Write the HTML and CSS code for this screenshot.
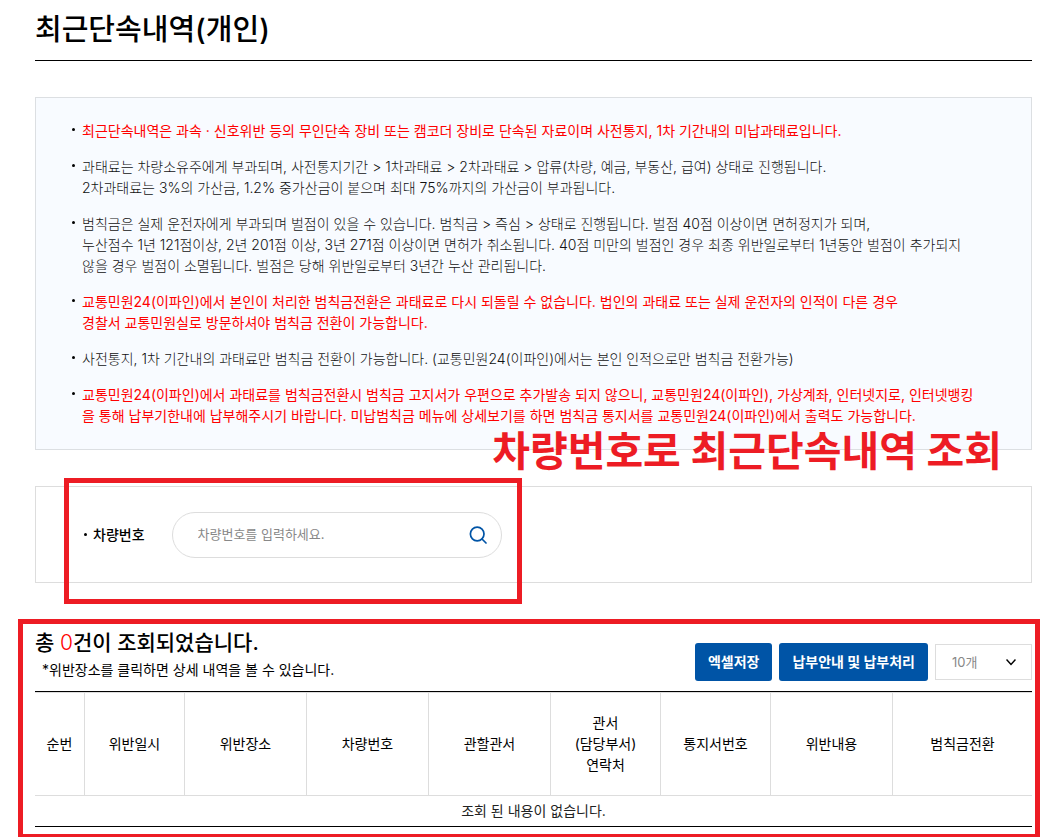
FILE: index.html
```html
<!DOCTYPE html>
<html lang="ko">

<head>
    <meta charset="UTF-8">
    <meta name="viewport" content="width=device-width, initial-scale=1.0">
    <title>최근단속내역(개인)</title>
    <link rel="stylesheet" href="styles.css">
</head>

<body>
    <main class="content">
        <h1>최근단속내역(개인)</h1>

        <div class="notice">
            <ul>
                <li class="red">최근단속내역은 과속 · 신호위반 등의 무인단속 장비 또는 캠코더 장비로 단속된 자료이며 사전통지, 1차 기간내의 미납과태료입니다.</li>
                <li>과태료는 차량소유주에게 부과되며, 사전통지기간 &gt; 1차과태료 &gt; 2차과태료 &gt; 압류(차량, 예금, 부동산, 급여) 상태로 진행됩니다.<br>
                    2차과태료는 3%의 가산금, 1.2% 중가산금이 붙으며 최대 75%까지의 가산금이 부과됩니다.</li>
                <li>범칙금은 실제 운전자에게 부과되며 벌점이 있을 수 있습니다. 범칙금 &gt; 즉심 &gt; 상태로 진행됩니다. 벌점 40점 이상이면 면허정지가 되며,<br>
                    누산점수 1년 121점이상, 2년 201점 이상, 3년 271점 이상이면 면허가 취소됩니다. 40점 미만의 벌점인 경우 최종 위반일로부터 1년동안 벌점이 추가되지<br>
                    않을 경우 벌점이 소멸됩니다. 벌점은 당해 위반일로부터 3년간 누산 관리됩니다.</li>
                <li class="red">교통민원24(이파인)에서 본인이 처리한 범칙금전환은 과태료로 다시 되돌릴 수 없습니다. 법인의 과태료 또는 실제 운전자의 인적이 다른 경우<br>
                    경찰서 교통민원실로 방문하셔야 범칙금 전환이 가능합니다.</li>
                <li>사전통지, 1차 기간내의 과태료만 범칙금 전환이 가능합니다. (교통민원24(이파인)에서는 본인 인적으로만 범칙금 전환가능)</li>
                <li class="red">교통민원24(이파인)에서 과태료를 범칙금전환시 범칙금 고지서가 우편으로 추가발송 되지 않으니, 교통민원24(이파인), 가상계좌, 인터넷지로, 인터넷뱅킹<br>
                    을 통해 납부기한내에 납부해주시기 바랍니다. 미납범칙금 메뉴에 상세보기를 하면 범칙금 통지서를 교통민원24(이파인)에서 출력도 가능합니다.</li>
            </ul>
        </div>

        <form class="search">
            <label for="carNo">차량번호</label>
            <div class="searchbox">
                <input type="text" id="carNo" placeholder="차량번호를 입력하세요.">
                <button type="submit" aria-label="검색">
                    <svg width="18" height="18" viewBox="0 0 18 18" fill="none" stroke="#0054a6" stroke-width="1.7">
                        <circle cx="8.2" cy="8" r="6.8" />
                        <path d="M13 13l4 4" stroke-linecap="round" />
                    </svg>
                </button>
            </div>
            <p class="mark-text">차량번호로 최근단속내역 조회</p>
            <div class="mark mark-search"></div>
        </form>

        <section class="result">
            <div class="result-top">
                <div>
                    <h2>총 <span>0</span>건이 조회되었습니다.</h2>
                    <p>*위반장소를 클릭하면 상세 내역을 볼 수 있습니다.</p>
                </div>
                <div class="tools">
                    <button type="button" class="btn">엑셀저장</button>
                    <button type="button" class="btn">납부안내 및 납부처리</button>
                    <div class="select">
                        <select aria-label="목록 개수">
                            <option>10개</option>
                            <option>20개</option>
                            <option>50개</option>
                        </select>
                        <svg width="10" height="8" viewBox="0 0 10 8" fill="none" stroke="#000" stroke-width="1.5">
                            <path d="M0.5 1.5l4.5 5 4.5-5" />
                        </svg>
                    </div>
                </div>
            </div>

            <table>
                <colgroup>
                    <col class="c-no">
                    <col class="c-date">
                    <col class="c-mid">
                    <col class="c-mid">
                    <col class="c-mid">
                    <col class="c-office">
                    <col class="c-office">
                    <col class="c-mid">
                    <col class="c-last">
                </colgroup>
                <thead>
                    <tr>
                        <th>순번</th>
                        <th>위반일시</th>
                        <th>위반장소</th>
                        <th>차량번호</th>
                        <th>관할관서</th>
                        <th>관서<br>(담당부서)<br>연락처</th>
                        <th>통지서번호</th>
                        <th>위반내용</th>
                        <th>범칙금전환</th>
                    </tr>
                </thead>
                <tbody>
                    <tr>
                        <td colspan="9">조회 된 내용이 없습니다.</td>
                    </tr>
                </tbody>
            </table>
            <div class="mark mark-result"></div>
        </section>
    </main>
</body>

</html>
```
FILE: styles.css
```css
* {
    box-sizing: border-box;
}

body {
    margin: 0;
    background-color: #fff;
    color: #000;
    font-family: Inter, "Noto Sans CJK KR", sans-serif;
    font-size: 14px;
    line-height: 21px;
}

h1,
h2,
p,
ul {
    margin: 0;
    padding: 0;
}

.content {
    padding: 0 26px 10px 35px;
}

h1 {
    height: 61px;
    margin-bottom: 36px;
    border-bottom: 1px solid #000;
    font-size: 29px;
    font-weight: 500;
    line-height: 60px;
}

/* Notice */
.notice {
    padding: 22px 36px 23px;
    border: 1px solid #dcdfe2;
    background-color: #f8fbff;
}

.notice ul {
    list-style: none;
}

.notice li {
    position: relative;
    padding-left: 10px;
    color: #111;
    font-weight: 300;
    white-space: nowrap;
}

.notice li + li {
    margin-top: 15px;
}

.notice li::before {
    content: "";
    position: absolute;
    top: 8px;
    left: 0;
    width: 3px;
    height: 3px;
    border-radius: 50%;
    background-color: #000;
}

.notice li.red {
    color: #f00;
    font-weight: 400;
}

/* Search */
.search {
    position: relative;
    display: flex;
    align-items: center;
    margin-top: 36px;
    padding: 25px 48px 24px;
    border: 1px solid #ddd;
}

.search label {
    display: flex;
    align-items: center;
    gap: 6px;
    margin-right: 27px;
    padding-bottom: 2px;
    font-weight: 500;
}

.search label::before {
    content: "";
    width: 3px;
    height: 3px;
    border-radius: 50%;
    background-color: #000;
}

.searchbox {
    display: flex;
    align-items: center;
    width: 330px;
    height: 46px;
    padding: 0 14px 0 25px;
    border: 1px solid #ddd;
    border-radius: 23px;
}

.searchbox input {
    flex: 1;
    min-width: 0;
    padding: 0 0 2px;
    border: 0;
    outline: none;
    background: none;
    font-family: inherit;
    font-size: 13px;
}

.searchbox input::placeholder {
    color: #888;
}

.searchbox button {
    display: flex;
    padding: 0;
    border: 0;
    background: none;
    cursor: pointer;
}

/* Red guide marks over the page */
.mark {
    position: absolute;
    border: 5px solid #ed1c24;
    pointer-events: none;
}

.mark-search {
    top: -9px;
    left: 28px;
    width: 458px;
    height: 126px;
}

.mark-result {
    top: -9px;
    right: -8px;
    bottom: -10px;
    left: -17px;
    border-bottom-width: 3px;
}

.mark-text {
    position: absolute;
    top: -58px;
    right: 29px;
    color: #ed1c24;
    font-size: 41px;
    font-weight: 700;
    line-height: 44px;
    white-space: nowrap;
}

/* Result */
.result {
    position: relative;
    margin-top: 45px;
}

.result-top {
    display: flex;
    justify-content: space-between;
    height: 63px;
}

.result h2 {
    font-size: 21px;
    font-weight: 500;
    line-height: 30px;
}

.result h2 span {
    color: #f00;
    font-weight: 300;
}

.result p {
    margin-top: 1px;
    padding-left: 7px;
}

.tools {
    display: flex;
    align-items: center;
    gap: 7px;
    padding-top: 5px;
}

.btn {
    height: 38px;
    padding: 0 13px 2px;
    border: 0;
    border-radius: 3px;
    background-color: #0054a6;
    color: #fff;
    font-family: inherit;
    font-size: 14px;
    font-weight: 700;
    cursor: pointer;
}

.select {
    position: relative;
    width: 97px;
}

.select select {
    width: 100%;
    height: 36px;
    padding: 0 16px;
    border: 1px solid #ddd;
    background-color: #fff;
    color: #888;
    font-family: inherit;
    font-size: 13px;
    appearance: none;
}

.select svg {
    position: absolute;
    top: 14px;
    right: 16px;
    pointer-events: none;
}

table {
    width: 100%;
    border-top: 1px solid #000;
    border-bottom: 1px solid #000;
    border-spacing: 0;
    table-layout: fixed;
}

.c-no {
    width: 50px;
}

.c-date {
    width: 100px;
}

.c-mid {
    width: 122px;
}

.c-office {
    width: 110px;
}

.c-last {
    width: 139px;
}

th {
    height: 104px;
    padding: 0 0 2px;
    border-top: 1px solid #ddd;
    border-right: 1px solid #ddd;
    border-bottom: 1px solid #ddd;
    font-weight: 400;
}

th:last-child {
    border-right: 0;
}

td {
    height: 30px;
    padding: 0 0 2px;
    color: #222;
    text-align: center;
}
```
